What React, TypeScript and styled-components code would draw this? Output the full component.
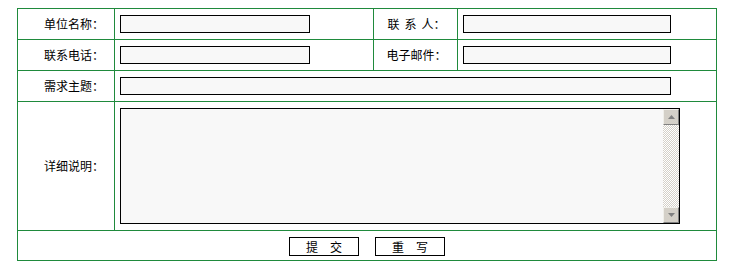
import React from "react";
import styled, { createGlobalStyle } from "styled-components";

const Global = createGlobalStyle`
  html, body { margin: 0; padding: 0; background: #fff; }
  body { font-family: "Noto Sans CJK SC", "Noto Sans", sans-serif; font-size: 12px; color: #000; }
`;

const Page = styled.div`
  padding: 8px 0 0 17px;
`;

const Form = styled.form`
  display: grid;
  grid-template-columns: 96px 258px 83px 258px;
  grid-template-rows: 30px 30px 30px 128px 29px;
  gap: 1px;
  padding: 1px;
  width: 700px;
  box-sizing: border-box;
  background: #1f8a3c;
`;

const Cell = styled.div<{ $span?: number; $align?: "left" | "right" | "center" }>`
  background: #fff;
  display: flex;
  align-items: center;
  justify-content: ${(p) =>
    p.$align === "right" ? "flex-end" : p.$align === "center" ? "center" : "flex-start"};
  grid-column: span ${(p) => p.$span ?? 1};
  padding: ${(p) => (p.$align === "right" ? "0 10px 0 0" : p.$align === "center" ? "0 0 0 2px" : "0 0 0 5px")};
  box-sizing: border-box;
  min-width: 0;
`;

const Label = styled.span`
  font-size: 12px;
  line-height: 14px;
  white-space: nowrap;
`;

const Gap = styled.span`
  display: inline-block;
  width: 5px;
`;

const TextInput = styled.input<{ $w: number }>`
  width: ${(p) => p.$w}px;
  height: 18px;
  box-sizing: border-box;
  border: 1px solid #000;
  background: #f8f8f8;
  padding: 0 2px;
  margin: 0;
  font: 12px "Noto Sans CJK SC", sans-serif;
  outline: none;
`;

const AreaBox = styled.div`
  width: 560px;
  height: 116px;
  box-sizing: border-box;
  border: 1px solid #000;
  background: #f8f8f8;
  display: flex;
`;

const Area = styled.textarea`
  flex: 1;
  border: none;
  background: transparent;
  resize: none;
  outline: none;
  margin: 0;
  padding: 2px;
  font: 12px "Noto Sans CJK SC", sans-serif;
  overflow: hidden;
`;

const ScrollBar = styled.div`
  width: 16px;
  display: flex;
  flex-direction: column;
  background: repeating-conic-gradient(#d4d0c8 0 25%, #ffffff 0 50%) 0 0 / 2px 2px;
`;

const ScrollTrack = styled.div`
  flex: 1;
`;

const ScrollButton = styled.div`
  width: 16px;
  height: 16px;
  box-sizing: border-box;
  background: #d4d0c8;
  border-top: 1px solid #f0efea;
  border-left: 1px solid #f0efea;
  border-right: 1px solid #808080;
  border-bottom: 1px solid #808080;
  display: flex;
  align-items: center;
  justify-content: center;
`;

const ButtonRow = styled(Cell)`
  justify-content: center;
  gap: 16px;
  padding: 0;
  padding-top: 2px;
`;

const Button = styled.button`
  width: 70px;
  height: 19px;
  box-sizing: border-box;
  border: 1px solid #000;
  background: #fff;
  padding: 0;
  margin: 0;
  font: 12px "Noto Sans CJK SC", sans-serif;
  color: #000;
  line-height: 16px;
  white-space: pre;
`;

const Arrow = ({ up }: { up?: boolean }) => (
  <svg width="7" height="4" viewBox="0 0 7 4">
    <polygon points={up ? "3.5,0 7,4 0,4" : "0,0 7,0 3.5,4"} fill="#808080" />
  </svg>
);

export default function App() {
  return (
    <>
      <Global />
      <Page>
        <Form onSubmit={(e) => e.preventDefault()}>
          <Cell $align="right"><Label>单位名称：</Label></Cell>
          <Cell><TextInput $w={190} /></Cell>
          <Cell $align="center"><Label>联<Gap />系<Gap />人：</Label></Cell>
          <Cell><TextInput $w={208} /></Cell>

          <Cell $align="right"><Label>联系电话：</Label></Cell>
          <Cell><TextInput $w={190} /></Cell>
          <Cell $align="center"><Label>电子邮件：</Label></Cell>
          <Cell><TextInput $w={208} /></Cell>

          <Cell $align="right"><Label>需求主题：</Label></Cell>
          <Cell $span={3}><TextInput $w={551} /></Cell>

          <Cell $align="right"><Label>详细说明：</Label></Cell>
          <Cell $span={3}>
            <AreaBox>
              <Area />
              <ScrollBar>
                <ScrollButton><Arrow up /></ScrollButton>
                <ScrollTrack />
                <ScrollButton><Arrow /></ScrollButton>
              </ScrollBar>
            </AreaBox>
          </Cell>

          <ButtonRow $span={4}>
            <Button type="submit">提　交</Button>
            <Button type="reset">重　写</Button>
          </ButtonRow>
        </Form>
      </Page>
    </>
  );
}
